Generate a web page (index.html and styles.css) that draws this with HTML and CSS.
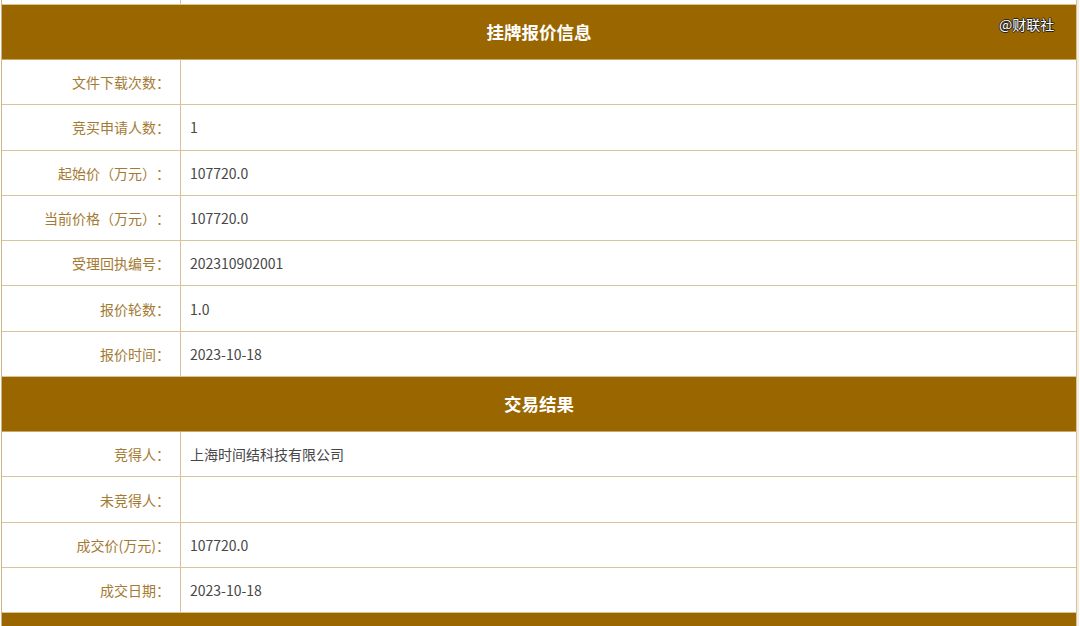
FILE: index.html
```html
<!DOCTYPE html>
<html lang="zh-CN">
<head>
<meta charset="utf-8">
<title>挂牌报价信息</title>
<link rel="stylesheet" href="styles.css">
</head>
<body>
<div class="page">
  <div class="sheet">
    <div class="row row-top"><div class="label"></div><div class="value"></div></div>

    <div class="section-head">挂牌报价信息</div>
    <div class="row"><div class="label">文件下载次数：</div><div class="value"></div></div>
    <div class="row"><div class="label">竞买申请人数：</div><div class="value">1</div></div>
    <div class="row"><div class="label">起始价（万元）：</div><div class="value">107720.0</div></div>
    <div class="row"><div class="label">当前价格（万元）：</div><div class="value">107720.0</div></div>
    <div class="row"><div class="label">受理回执编号：</div><div class="value">202310902001</div></div>
    <div class="row"><div class="label">报价轮数：</div><div class="value">1.0</div></div>
    <div class="row"><div class="label">报价时间：</div><div class="value">2023-10-18</div></div>

    <div class="section-head">交易结果</div>
    <div class="row"><div class="label">竞得人：</div><div class="value">上海时间结科技有限公司</div></div>
    <div class="row"><div class="label">未竞得人：</div><div class="value"></div></div>
    <div class="row"><div class="label">成交价(万元)：</div><div class="value">107720.0</div></div>
    <div class="row"><div class="label">成交日期：</div><div class="value">2023-10-18</div></div>

    <div class="section-head"></div>
  </div>
  <div class="watermark">@财联社</div>
</div>
</body>
</html>
```

FILE: styles.css
```css
html, body {
  margin: 0;
  padding: 0;
  background: #ffffff;
  overflow: hidden;
}

body {
  font-family: "Noto Sans CJK SC", "Noto Sans", sans-serif;
  font-size: 14px;
  text-spacing-trim: space-all;
}

.page {
  position: relative;
  width: 1080px;
  height: 626px;
  overflow: hidden;
  padding-left: 1px;
  box-sizing: border-box;
}

.sheet {
  width: 1076px;
  border-left: 1px solid #cdb385;
  border-right: 1px solid #d8c29c;
  box-sizing: border-box;
  box-shadow: 2px 0 0 #f6ecdc;
}

.row {
  display: grid;
  grid-template-columns: 179px 1fr;
  height: 45.3px;
  box-sizing: border-box;
  border-bottom: 1px solid #d9c39b;
}

.row-top {
  height: 5px;
}

.label {
  border-right: 1px solid #d9c39b;
  color: #a47a33;
  text-align: right;
  padding-right: 10px;
  display: flex;
  align-items: center;
  justify-content: flex-end;
  white-space: nowrap;
}

.value {
  color: #474747;
  padding-left: 9px;
  display: flex;
  align-items: center;
  white-space: nowrap;
}

.section-head {
  height: 55px;
  box-sizing: border-box;
  background: #996600;
  border-bottom: 1px solid #c9a866;
  color: #ffffff;
  font-size: 17.5px;
  font-weight: bold;
  display: flex;
  align-items: center;
  justify-content: center;
  padding-bottom: 1px;
}

.watermark {
  position: absolute;
  top: 14px;
  left: 999px;
  color: #ffffff;
  font-size: 14px;
  text-shadow: 1px 0 0 #222, -1px 0 0 #222, 0 1px 0 #222, 0 -1px 0 #222;
}
```
